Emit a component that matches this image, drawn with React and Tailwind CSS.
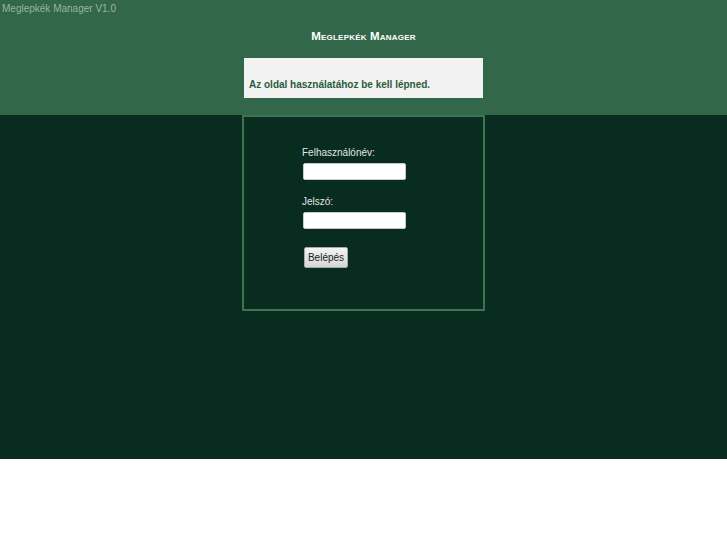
const App = () => {
  return (
    <div className="w-full bg-white" style={{ fontFamily: '"Liberation Sans", Arial, sans-serif' }}>
      <div className="h-[115px] bg-[#33674a] flex flex-col">
        <div className="pl-[2px] pt-[2px] text-[10px] leading-[13px] text-[#93b79c]">
          Meglepkék Manager V1.0
        </div>
        <div className="mt-[14px] text-center text-[11.5px] leading-[14px] font-bold text-white tracking-[0.2px] [font-variant:small-caps]">
          Meglepkék Manager
        </div>
        <div className="mx-auto mt-[15px] w-[239px] h-[40px] bg-[#f2f2f2] flex items-end px-[5px] pb-[7px]">
          <span className="text-[10px] leading-[12px] font-bold text-[#2b5a3c]">
            Az oldal használatához be kell lépned.
          </span>
        </div>
      </div>
      <div className="h-[344px] bg-[#082c1f] flex justify-center">
        <div className="w-[243px] h-[196px] border-2 border-[#3c7450] pl-[58px] pt-[30px]">
          <label className="block text-[10px] leading-[12px] text-[#e4e4e4]">
            Felhasználónév:
          </label>
          <input
            type="text"
            className="block mt-[4px] ml-[1px] w-[103px] h-[17px] bg-white rounded-[2px] border border-[#c9c9c9]"
          />
          <label className="block mt-[16px] text-[10px] leading-[12px] text-[#e4e4e4]">
            Jelszó:
          </label>
          <input
            type="password"
            className="block mt-[4px] ml-[1px] w-[103px] h-[17px] bg-white rounded-[2px] border border-[#c9c9c9]"
          />
          <button className="block mt-[18px] ml-[2px] w-[44px] h-[21px] rounded-[2px] border border-[#a8a8a8] bg-gradient-to-b from-[#f4f4f4] to-[#d6d6d6] text-[10px] text-[#222]">
            Belépés
          </button>
        </div>
      </div>
      <div className="h-[86px] bg-white" />
    </div>
  )
}

export default App
